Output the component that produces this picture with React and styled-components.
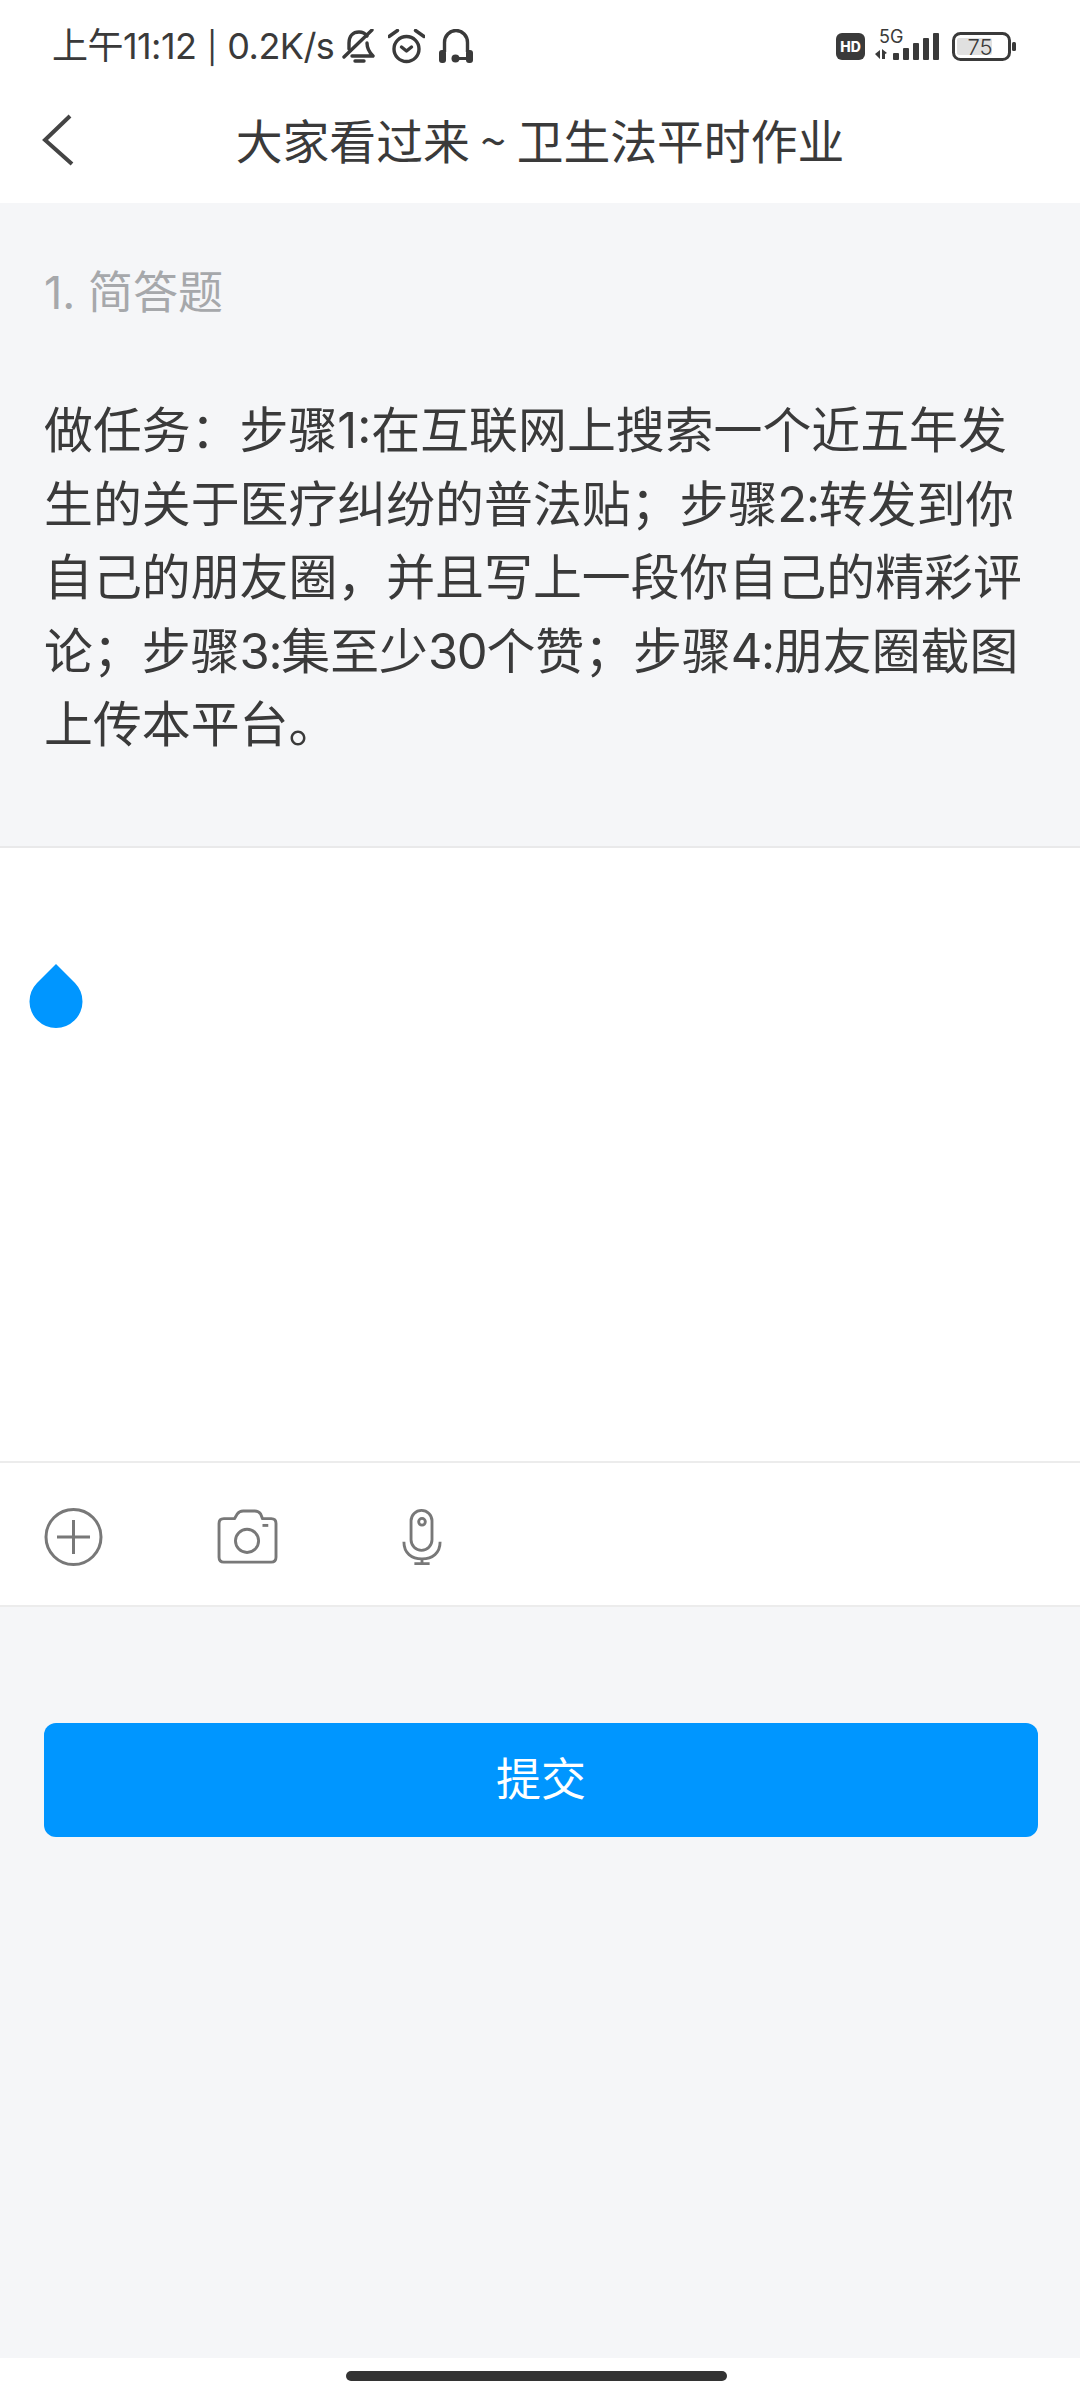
import React from "react";
import styled, { createGlobalStyle } from "styled-components";

const Global = createGlobalStyle`
  html, body { margin: 0; padding: 0; background: #fff; }
  * { box-sizing: border-box; }
  body { font-family: "Noto Sans CJK SC", "Noto Sans", sans-serif; }
`;
const Page = styled.div`
  width: 1080px; height: 2400px; display: flex; flex-direction: column; background: #fff; overflow: hidden;
`;
const StatusBar = styled.div`
  height: 90px; flex: none; display: flex; align-items: center; justify-content: space-between; padding: 0 54px 0 52px; color: #3a3a3a;
`;
const StatusLeft = styled.div`display: flex; align-items: center; padding-top: 3px;`;
const Clock = styled.span`
  font-family: Inter, "Noto Sans CJK SC", sans-serif; font-size: 36px; letter-spacing: -0.55px; line-height: 46px; white-space: nowrap; margin-right: 8px;
`;
const ClockSep = styled.span`font-size: 31px; margin: 0 1px;`;
const StatusIcons = styled.div`display: flex; align-items: center; gap: 13px;`;
const NavBar = styled.div`
  height: 113px; flex: none; display: flex; align-items: center; position: relative; padding-bottom: 16px;
`;
const BackButton = styled.div`position: absolute; left: 40px; top: 24px; line-height: 0;`;
const NavTitle = styled.div`
  width: 100%; text-align: center; font-size: 46.8px; line-height: 60px; color: #3a3a3a;
`;
const Question = styled.section`
  height: 645px; flex: none; background: #f5f6f8; border-bottom: 2px solid #e9e9ea; padding: 60px 44px 0;
`;
const QuestionType = styled.div`font-family: Inter, "Noto Sans CJK SC", sans-serif; font-size: 45px; line-height: 60px; color: #a6a8ab;`;
const QuestionBody = styled.p`
  margin: 71px 0 0; font-family: Inter, "Noto Sans CJK SC", sans-serif; font-size: 48.9px; line-height: 73.6px; color: #3a3a3a; white-space: nowrap;
`;
const Digits = styled.span`letter-spacing: -1.3px;`;
const Editor = styled.div`height: 613px; flex: none; position: relative; background: #fff;`;
const CaretHandle = styled.div`position: absolute; left: 29px; top: 116px; line-height: 0;`;
const Toolbar = styled.div`
  height: 146px; flex: none; background: #fff; border-top: 2px solid #ececec; border-bottom: 2px solid #ececec; display: flex; align-items: center; padding: 6px 0 0 44px;
`;
const ToolIcon = styled.div`width: ${p => p.$w}px; flex: none; line-height: 0;`;
const Footer = styled.div`flex: 1; background: #f5f6f8; padding: 116px 42px 0 44px;`;
const Submit = styled.button`
  display: block; width: 100%; height: 114px; background: #0096ff; border: 0; border-radius: 12px; color: #fff; font-family: inherit; font-size: 45px; line-height: 60px; padding: 0 0 6px;
`;
const HomeArea = styled.div`height: 42px; flex: none; background: #fff; display: flex; justify-content: center; padding: 13px 8px 0 0;`;
const HomeBar = styled.div`width: 381px; height: 10px; border-radius: 5px; background: #333;`;

const BellOff = () => (
  <svg width="33" height="36" viewBox="0 0 33 36" fill="none" stroke="#3a3a3a" strokeWidth="3.4" strokeLinecap="round" strokeLinejoin="round">
    <path d="M7 20V14C7 7 11 3 17 3c3 0 6 1 8 4" />
    <path d="M25 14c0 6 3 10 6 13H10" />
    <path d="M30 1 2 28" />
    <path d="M13 32h9" />
  </svg>
);
const Alarm = () => (
  <svg width="37" height="36" viewBox="0 0 37 36" fill="none" stroke="#3a3a3a" strokeWidth="3.4" strokeLinecap="round" strokeLinejoin="round">
    <circle cx="18.5" cy="20" r="12.5" />
    <path d="M13.5 18l5 4 5-4" />
    <path d="M1 7.5l8.5-6M36 7.5l-8.5-6" />
  </svg>
);
const Headset = () => (
  <svg width="36" height="36" viewBox="0 0 36 36" fill="none">
    <path d="M6.5 23V13.5a11.5 12 0 0 1 23 0V23" stroke="#3a3a3a" strokeWidth="3.4" />
    <rect x="1" y="21" width="7" height="13" rx="3" fill="#3a3a3a" />
    <rect x="28" y="21" width="7" height="13" rx="3" fill="#3a3a3a" />
    <path d="M18 29.5h11" stroke="#3a3a3a" strokeWidth="3" />
    <circle cx="17.5" cy="29.5" r="4" fill="#3a3a3a" />
  </svg>
);
const StatusRight = () => (
  <svg width="190" height="34" viewBox="0 0 190 34">
    <rect x="0" y="5" width="29" height="27" rx="6" fill="#3a3a3a" />
    <text x="14.5" y="24" textAnchor="middle" fill="#fff" fontFamily="Inter, sans-serif" fontWeight="800" fontSize="14">HD</text>
    <text x="43" y="15" fill="#3a3a3a" fontFamily="Inter, sans-serif" fontSize="18">5G</text>
    <path d="M39 26l5-4v9zM46 21l5 4-2 1v5h-3z" fill="#3a3a3a" />
    <rect x="57" y="25" width="6" height="7" rx="1" fill="#3a3a3a" />
    <rect x="67" y="20" width="6" height="12" rx="1" fill="#3a3a3a" />
    <rect x="77" y="15" width="6" height="17" rx="1" fill="#3a3a3a" />
    <rect x="87" y="10" width="6" height="22" rx="1" fill="#3a3a3a" />
    <rect x="97" y="5" width="6" height="27" rx="1" fill="#3a3a3a" />
    <rect x="117.5" y="5.5" width="56" height="26" rx="7" fill="none" stroke="#3a3a3a" strokeWidth="3" />
    <rect x="121" y="10" width="35" height="17" rx="2" fill="#e0e0e0" />
    <text x="144" y="26.5" textAnchor="middle" fill="#3a3a3a" fontFamily="Inter, sans-serif" fontWeight="300" fontSize="22">75</text>
    <rect x="176" y="14" width="4" height="9" rx="1.5" fill="#3a3a3a" />
  </svg>
);
const Chevron = () => (
  <svg width="34" height="54" viewBox="0 0 34 54" fill="none" stroke="#444" strokeWidth="4">
    <path d="M30 2 5 26l27 24" />
  </svg>
);
const PlusIcon = () => (
  <svg width="60" height="60" viewBox="0 0 60 60" fill="none" stroke="#787878" strokeWidth="3">
    <circle cx="29.5" cy="30" r="27.5" />
    <path d="M13 30h33M29.5 13v34" />
  </svg>
);
const CameraIcon = () => (
  <svg width="62" height="56" viewBox="0 0 64 58" fill="none" stroke="#787878" strokeWidth="3">
    <path d="M7 10h11l3-5q2-3 6-3h12q4 0 6 3l2 5h9q5 0 5 5v35q0 5-5 5H7q-5 0-5-5V15q0-5 5-5z" strokeLinejoin="round" />
    <circle cx="31" cy="33" r="12" />
    <path d="M47 17h6" />
  </svg>
);
const MicIcon = () => (
  <svg width="40" height="58" viewBox="0 0 42 60" fill="none" stroke="#787878" strokeWidth="3">
    <rect x="9.5" y="2" width="22" height="42" rx="11" />
    <circle cx="21" cy="14" r="3.5" />
    <path d="M2 35c0 12 8 18 19 18s19-6 19-18M21 53v5M13 58h16" />
  </svg>
);
const Drop = () => (
  <svg width="54" height="64" viewBox="0 0 54 64">
    <path d="M27 0 L46 19 A26.5 26.5 0 1 1 8 19 Z" fill="#0096ff" />
  </svg>
);

export default function App() {
  return (
    <Page>
      <Global />
      <StatusBar>
        <StatusLeft>
          <Clock>上午11:12 <ClockSep>|</ClockSep> 0.2K/s</Clock>
          <StatusIcons>
            <BellOff />
            <Alarm />
            <Headset />
          </StatusIcons>
        </StatusLeft>
        <StatusRight />
      </StatusBar>
      <NavBar>
        <BackButton><Chevron /></BackButton>
        <NavTitle>大家看过来 ~ 卫生法平时作业</NavTitle>
      </NavBar>
      <Question>
        <QuestionType>1. 简答题</QuestionType>
        <QuestionBody>
          {"做任务\uFF1A步骤1:在互联网上搜索一个近五年发"}<br />
          {"生的关于医疗纠纷的普法贴\uFF1B步骤"}<Digits>2:</Digits>{"转发到你"}<br />
          {"自己的朋友圈\uFF0C并且写上一段你自己的精彩评"}<br />
          {"论\uFF1B步骤"}<Digits>3:</Digits>{"集至少"}<Digits>30</Digits>{"个赞\uFF1B步骤"}<Digits>4:</Digits>{"朋友圈截图"}<br />
          上传本平台。
        </QuestionBody>
      </Question>
      <Editor>
        <CaretHandle><Drop /></CaretHandle>
      </Editor>
      <Toolbar>
        <ToolIcon $w={173}><PlusIcon /></ToolIcon>
        <ToolIcon $w={185}><CameraIcon /></ToolIcon>
        <ToolIcon $w={40}><MicIcon /></ToolIcon>
      </Toolbar>
      <Footer>
        <Submit>提交</Submit>
      </Footer>
      <HomeArea><HomeBar /></HomeArea>
    </Page>
  );
}
